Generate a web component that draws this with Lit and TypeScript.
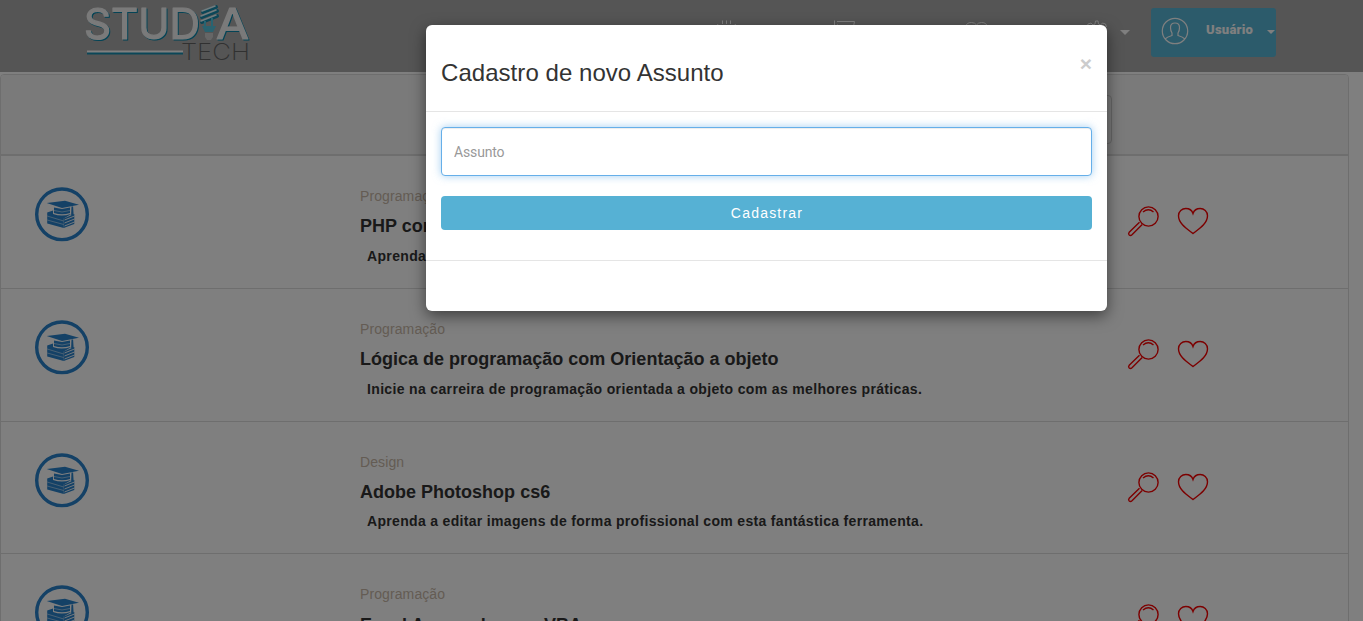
import { LitElement, html, css } from "lit";
import { customElement } from "lit/decorators.js";

interface Course {
  category: string;
  title: string;
  text: string;
}

const courses: Course[] = [
  { category: "Programação", title: "PHP com Orientação a objeto", text: "Aprenda a programar para web com orientação a objeto." },
  { category: "Programação", title: "Lógica de programação com Orientação a objeto", text: "Inicie na carreira de programação orientada a objeto com as melhores práticas." },
  { category: "Design", title: "Adobe Photoshop cs6", text: "Aprenda a editar imagens de forma profissional com esta fantástica ferramenta." },
  { category: "Programação", title: "Excel Avançado com VBA", text: "" },
];

const heartPath = "M16 28.5C11 24.5 1.5 19 1.5 10.8C1.5 6.5 5 3.5 8.8 3.5C12.3 3.5 15 5.5 16 8.5C17 5.5 19.7 3.5 23.2 3.5C27 3.5 30.5 6.5 30.5 10.8C30.5 19 21 24.5 16 28.5Z";

@customElement("studia-logo")
export class StudiaLogo extends LitElement {
  static styles = css`
    :host { display: block; }
    svg { display: block; }
    .word { font: 400 42px Inter, sans-serif; fill: #f4f4f4; stroke: #f4f4f4; stroke-width: 1.2; stroke-linejoin: round; filter: drop-shadow(1px 1.5px 0.5px #0888ac); }
    .tech { font: 200 23px Inter, sans-serif; fill: #626262; }
  `;
  render() {
    return html`<svg width="168" height="64" viewBox="0 0 168 64" fill="none">
      <g class="word">
        <text x="-1" y="38.500" textLength="116" lengthAdjust="spacingAndGlyphs">STUD</text>
        <text x="131" y="38.500" textLength="33" lengthAdjust="spacingAndGlyphs">A</text>
      </g>
      <path d="M118 12L131 7M117 17L132 11M117 22L132 16" stroke="#168eb0" stroke-width="4" stroke-linecap="round" />
      <path d="M117 11L130 6M116 16L131 10M116 21L131 15" stroke="#e8f8fc" stroke-width="1.600" stroke-linecap="round" />
      <path d="M120 21v5M127 18v8" stroke="#4fc8e4" stroke-width="2" />
      <path d="M117 26h14l-3 6h-8z" fill="#54c4de" />
      <path d="M120 33h8v4l-2 3h-4l-2-3z" fill="#ccc" />
      <path d="M2 53h96" stroke="#168eb0" stroke-width="3" />
      <path d="M2 51.500h96" stroke="#fff" stroke-width="1.800" />
      <text class="tech" x="96" y="59.500" textLength="69" lengthAdjust="spacingAndGlyphs">TECH</text>
    </svg>`;
  }
}

@customElement("course-row")
export class CourseRow extends LitElement {
  static properties = { course: { attribute: false } };
  declare course: Course;
  static styles = css`
    :host {
      display: flex;
      box-sizing: border-box;
      height: 133px;
      border-bottom: 1px solid #ddd;
      padding-left: 33px;
      font-family: "Liberation Sans", Arial, sans-serif;
    }
    :host(:nth-of-type(3)) { height: 132px; }
    :host(:nth-of-type(3)) .text { margin-top: 7px; letter-spacing: 0.32px; }
    :host(:nth-of-type(4)) .title { margin-top: 9px; }
    svg { display: block; fill: none; }
    .badge { width: 326px; padding-top: 30px; }
    .info { width: 766px; padding-top: 30px; white-space: nowrap; }
    .category { font-size: 14px; line-height: 20px; color: #c8b8a8; letter-spacing: 0.1px; }
    .title { margin: 8px 0 0; font-size: 18px; line-height: 24px; font-weight: 700; color: #333; letter-spacing: 0.01px; }
    .text { margin: 8px 0 0 7px; font-size: 14px; line-height: 20px; font-weight: 700; color: #333; letter-spacing: 0.345px; }
    .actions { display: flex; gap: 17px; padding-top: 49px; stroke: #f80000; stroke-width: 1.4; }
  `;
  render() {
    return html`
      <div class="badge">
        <svg width="56" height="56" viewBox="0 0 56 56">
          <circle cx="28" cy="28.300" r="25.300" stroke="#2882cc" stroke-width="3.400" />
          <g fill="#2882cc">
            <path d="M12.700 17L31 14.700L45 18.700L28 22Z" />
            <path d="M20 21.500L28 23L36 21.500V27Q28 29.500 20 27Z" />
            <path d="M37.500 20.500h1.600l.6 9h-2.600z" />
            <path d="M13.200 26.500L19 24.500V28Q28 31 36.500 28V28.500L29.700 32.500V42L13.200 37.500Z" />
            <path d="M29.700 32.500L40.300 28V38L29.700 42Z" />
          </g>
          <path d="M13.200 30L29.700 35M13.200 34L29.700 38.500M20 24.500Q28 27.500 36 24.500" stroke="#fff" stroke-width="0.500" />
          <path d="M30.500 34L40.500 30M30.500 37L40.500 33M30.500 40L40.500 36" stroke="#fff" stroke-width="0.900" />
        </svg>
      </div>
      <div class="info">
        <div class="category">${this.course.category}</div>
        <h3 class="title">${this.course.title}</h3>
        <p class="text">${this.course.text}</p>
      </div>
      <div class="actions">
        <svg width="34" height="32" viewBox="0 0 34 32">
          <circle cx="22.500" cy="11.500" r="9.600" />
          <path d="M17 7Q22.500 2.500 27.500 7" />
          <path d="M13.500 17.200L3.200 27.200Q2 28.700 3.200 30Q4.600 31 6 29.800L16.200 19.500" />
        </svg>
        <svg width="32" height="32" viewBox="0 0 32 32"><path d=${heartPath} /></svg>
      </div>`;
  }
}

@customElement("subject-dialog")
export class SubjectDialog extends LitElement {
  static styles = css`
    :host {
      display: block;
      box-sizing: border-box;
      background: #fff;
      border-radius: 6px;
      box-shadow: 0 5px 15px rgba(0, 0, 0, 0.5);
      font-family: "Liberation Sans", Arial, sans-serif;
    }
    .head {
      display: flex;
      justify-content: space-between;
      box-sizing: border-box;
      height: 87px;
      padding: 29px 15px 0;
      border-bottom: 1px solid #e5e5e5;
    }
    h2 { margin: 4px 0 0; font-size: 24px; line-height: 30px; font-weight: 400; color: #333; letter-spacing: 0.05px; }
    .close { border: 0; padding: 0; background: none; height: 20px; color: #ccc; font: 700 21px/20px "Liberation Sans", Arial, sans-serif; }
    .body { height: 149px; box-sizing: border-box; padding: 15px 15px 0; border-bottom: 1px solid #e5e5e5; }
    input {
      display: block;
      box-sizing: border-box;
      width: 100%;
      height: 49px;
      padding: 0 12px;
      border: 1px solid #66afe9;
      border-radius: 4px;
      outline: 0;
      box-shadow: inset 0 1px 1px rgba(0, 0, 0, 0.075), 0 0 8px rgba(102, 175, 233, 0.6);
      font: 14px Roboto, sans-serif;
      letter-spacing: -0.15px;
    }
    input::placeholder { color: #999; }
    .submit {
      display: block;
      width: 100%;
      height: 34px;
      margin-top: 20px;
      padding: 0 0 0 1px;
      border: 0;
      border-radius: 4px;
      background: #56b1d4;
      color: #fff;
      font: 14px "Liberation Sans", Arial, sans-serif;
      letter-spacing: 1.2px;
    }
    .foot { height: 50px; }
  `;
  render() {
    return html`
      <div class="head"><h2>Cadastro de novo Assunto</h2><button class="close">×</button></div>
      <div class="body">
        <input placeholder="Assunto" />
        <button class="submit">Cadastrar</button>
      </div>
      <div class="foot"></div>`;
  }
}

@customElement("app-root")
export class AppRoot extends LitElement {
  static styles = css`
    :host { display: block; position: relative; height: 100vh; overflow: hidden; background: #fff; }
    svg { display: block; fill: none; stroke: #fff; }
    header { display: flex; height: 72px; background: #aaa; }
    studia-logo { width: 168px; margin-left: 85px; }
    nav { display: flex; box-sizing: border-box; width: 898px; padding: 19px 21px 0 463px; }
    .item { width: 123.3px; flex: none; }
    .item.last { display: flex; width: auto; gap: 12px; }
    .caret { width: 0; height: 0; border: 5px solid transparent; border-top-color: #fff; border-bottom: 0; }
    .last .caret { margin-top: 11px; }
    .user {
      display: flex;
      box-sizing: border-box;
      width: 125px;
      height: 49px;
      margin-top: 8px;
      padding: 9px 1px 0 10px;
      border-radius: 3px;
      background: #58b6d6;
      color: #fff;
      font: 900 13px/26px Roboto, sans-serif;
      letter-spacing: 0.25px;
    }
    .user .name { width: 61px; margin-left: 17px; }
    .user .caret { margin-top: 13px; border-width: 4px; border-bottom: 0; flex: none; }
    .panel { box-sizing: border-box; width: 1349px; height: 700px; margin-top: 2px; border: 1px solid #ddd; border-radius: 4px; }
    .panel-head { box-sizing: border-box; height: 81px; padding: 20px 0 0 450px; background: #f5f5f5; border-bottom: 2px solid #ddd; border-radius: 3px 3px 0 0; }
    .filter { display: block; box-sizing: border-box; width: 661px; height: 49px; border: 1px solid #ccc; border-radius: 4px; background: none; }
    .backdrop { position: absolute; inset: 0; background: rgba(0, 0, 0, 0.5); }
    subject-dialog { position: absolute; left: 426px; top: 25px; width: 681px; }
  `;
  render() {
    return html`
      <header>
        <studia-logo></studia-logo>
        <nav>
          <div class="item"><svg width="22" height="24"><path d="M6.500 1.500v3.500M10.500 1.500v3.500M14.500 1.500v3.500M1 5.500l2 1M20 5.500l-2 1" /></svg></div>
          <div class="item"><svg width="24" height="24" viewBox="6 0 24 24" overflow="visible"><path d="M1.500 7V1.500M4 2.500h17.500l-2 10H7L4.500 5.500" /></svg></div>
          <div class="item"><svg width="24" height="24" viewBox="-2 0 24 24" overflow="visible"><path d="M1 8Q1 3.500 6.500 3.500Q10 3.500 11.500 6Q13 3.500 16.500 3.500Q22 3.500 22 8Q22 14 11.500 20Q1 14 1 8Z" /></svg></div>
          <div class="item last">
            <svg width="22" height="24"><path d="M1 8l1-3 3-1 2 2 2-1 .5-3h2.500l.5 3 2 1 2-2 3 1 1 3" /></svg>
            <span class="caret"></span>
          </div>
        </nav>
        <div class="user">
          <svg width="28" height="28" viewBox="0 0 28 28" stroke-width="1.200">
            <circle cx="14" cy="14" r="12.700" />
            <path d="M4 22Q6 20 11 18.500V16Q9.500 14 9.500 10.500Q9.500 6 14 6Q18.500 6 18.500 10.500Q18.500 14 17 16V18.500Q22 20 24 22" />
          </svg>
          <span class="name">Usuário</span>
          <span class="caret"></span>
        </div>
      </header>
      <section class="panel">
        <div class="panel-head"><input class="filter" /></div>
        ${courses.map((c) => html`<course-row .course=${c}></course-row>`)}
      </section>
      <div class="backdrop"></div>
      <subject-dialog></subject-dialog>`;
  }
}
